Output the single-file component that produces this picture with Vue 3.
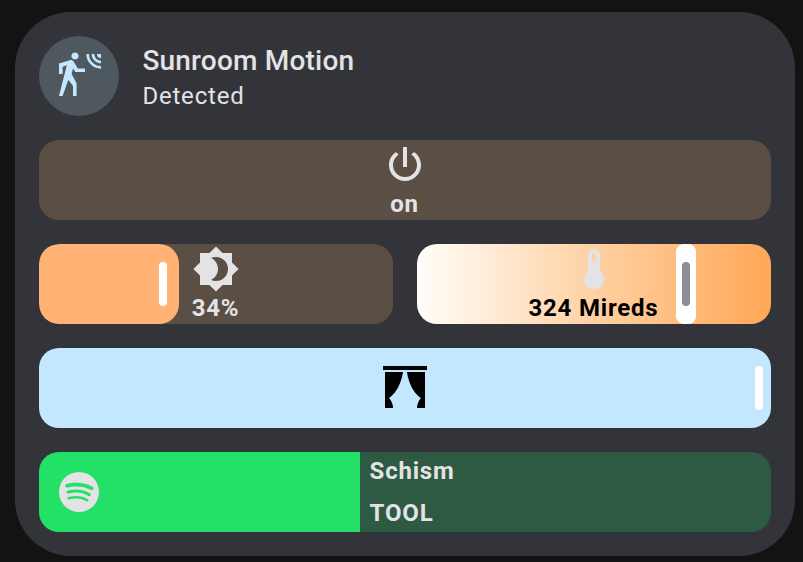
<script setup>
const icons = {
  motion:
    'M10,0.2C9,0.2 8.2,1 8.2,2C8.2,3 9,3.8 10,3.8C11,3.8 11.8,3 11.8,2C11.8,1 11,0.2 10,0.2M15.67,1A7.33,7.33 0 0,0 23,8.33V7A6,6 0 0,1 17,1H15.67M18.33,1C18.33,3.58 20.42,5.67 23,5.67V4.33C21.16,4.33 19.67,2.84 19.67,1H18.33M21,1A2,2 0 0,0 23,3V1H21M7.92,4.03C7.75,4.03 7.58,4.06 7.42,4.11L2,5.8V11H3.8V7.33L5.91,6.67L2,22H3.8L6.67,13.89L9,17V22H10.8V15.59L8.31,11.05L9.04,8.18L10.12,10H15V8.2H11.38L9.38,4.87C9.08,4.37 8.54,4.03 7.92,4.03Z',
  power:
    'M16.56,5.44L15.11,6.89C16.84,7.94 18,9.83 18,12A6,6 0 0,1 12,18A6,6 0 0,1 6,12C6,9.83 7.16,7.94 8.88,6.88L7.44,5.44C5.36,6.88 4,9.28 4,12A8,8 0 0,0 12,20A8,8 0 0,0 20,12C20,9.28 18.64,6.88 16.56,5.44M13,3H11V13H13',
  brightness:
    'M12,18C11.11,18 10.26,17.8 9.5,17.45C11.56,16.5 13,14.42 13,12C13,9.58 11.56,7.5 9.5,6.55C10.26,6.2 11.11,6 12,6A6,6 0 0,1 18,12A6,6 0 0,1 12,18M20,8.69V4H15.31L12,0.69L8.69,4H4V8.69L0.69,12L4,15.31V20H8.69L12,23.31L15.31,20H20V15.31L23.31,12L20,8.69Z',
  thermometer:
    'M15 13V5A3 3 0 0 0 9 5V13A5 5 0 1 0 15 13M12 4A1 1 0 0 1 13 5V8H11V5A1 1 0 0 1 12 4Z',
  curtains:
    'M23 3H1V1H23V3M2 22H6C6 19 4 17 4 17C10 13 11 4 11 4H2V22M22 4H13C13 4 14 13 20 17C20 17 18 19 18 22H22V4Z',
  spotify:
    'M17.9,10.9C14.7,9 9.35,8.8 6.3,9.75C5.8,9.9 5.3,9.6 5.15,9.15C5,8.65 5.3,8.15 5.75,8C9.3,6.95 15.15,7.15 18.85,9.35C19.3,9.6 19.45,10.2 19.2,10.65C18.95,11 18.35,11.15 17.9,10.9M17.8,13.7C17.55,14.05 17.1,14.2 16.75,13.95C14.05,12.3 9.95,11.8 6.8,12.8C6.4,12.9 5.95,12.7 5.85,12.3C5.75,11.9 5.95,11.45 6.35,11.35C10,10.25 14.5,10.8 17.6,12.7C17.9,12.85 18.05,13.35 17.8,13.7M16.6,16.45C16.4,16.75 16.05,16.85 15.75,16.65C13.4,15.2 10.45,14.9 6.95,15.7C6.6,15.8 6.3,15.55 6.2,15.25C6.1,14.9 6.35,14.6 6.65,14.5C10.45,13.65 13.75,14 16.35,15.6C16.7,15.75 16.75,16.15 16.6,16.45M12,2A10,10 0 0,0 2,12A10,10 0 0,0 12,22A10,10 0 0,0 22,12A10,10 0 0,0 12,2Z',
}
</script>

<template>
  <main class="page">
    <section class="card">
      <header class="header">
        <div class="badge">
          <svg class="icon" viewBox="0 0 24 24"><path :d="icons.motion" /></svg>
        </div>
        <div class="heading">
          <div class="title">Sunroom Motion</div>
          <div class="state">Detected</div>
        </div>
      </header>

      <div class="row power">
        <div class="content">
          <svg class="icon" viewBox="0 0 24 24"><path :d="icons.power" /></svg>
          <span class="label">on</span>
        </div>
      </div>

      <div class="pair">
        <div class="row brightness">
          <div class="fill"><i class="handle"></i></div>
          <div class="content">
            <svg class="icon" viewBox="0 0 24 24"><path :d="icons.brightness" /></svg>
            <span class="label">34%</span>
          </div>
        </div>
        <div class="row temperature">
          <div class="thumb"><i class="handle"></i></div>
          <div class="content">
            <svg class="icon" viewBox="0 0 24 24"><path :d="icons.thermometer" /></svg>
            <span class="label dark">324 Mireds</span>
          </div>
        </div>
      </div>

      <div class="row curtain">
        <div class="fill"><i class="handle"></i></div>
        <div class="content centered">
          <svg class="icon" viewBox="0 0 24 24"><path :d="icons.curtains" /></svg>
        </div>
      </div>

      <div class="row media">
        <div class="source">
          <svg class="icon" viewBox="0 0 24 24"><path :d="icons.spotify" /></svg>
        </div>
        <div class="track">
          <span class="label">Schism</span>
          <span class="label">TOOL</span>
        </div>
      </div>
    </section>
  </main>
</template>

<style>
body {
  background: #131313;
}
</style>

<style scoped>
.page {
  box-sizing: border-box;
  width: 803px;
  height: 562px;
  padding: 12px 8px 6px 15px;
  overflow: hidden;
  font-family: Roboto, 'Liberation Sans', sans-serif;
  color: #e3e3e6;
}
.card {
  box-sizing: border-box;
  height: 544px;
  padding: 24px;
  border-radius: 56px;
  background: #333439;
  display: flex;
  flex-direction: column;
  gap: 24px;
}
.header {
  display: flex;
  height: 80px;
  gap: 23.4px;
}
.badge {
  width: 80px;
  height: 80px;
  border-radius: 50%;
  background: #50585f;
  color: #c2e7ff;
  display: flex;
  align-items: center;
  justify-content: center;
}
.icon {
  display: block;
  width: 48px;
  height: 48px;
  flex: none;
  fill: currentColor;
}
.heading {
  padding-top: 5px;
}
.title {
  font-size: 28px;
  line-height: 40px;
  font-weight: 500;
  letter-spacing: 0.2px;
}
.state {
  font-size: 24px;
  line-height: 30px;
  letter-spacing: 0.8px;
}
.row {
  display: grid;
  height: 80px;
  border-radius: 20px;
  overflow: hidden;
}
.row > * {
  grid-row: 1;
}
.power,
.brightness {
  background: #5b4e44;
}
.pair {
  display: grid;
  grid-template-columns: 1fr 1fr;
  gap: 24px;
}
.content,
.fill,
.thumb {
  grid-column: 1;
}
.content {
  display: flex;
  flex-direction: column;
  align-items: center;
  padding-top: 1px;
}
.centered {
  padding-top: 0;
  justify-content: center;
}
.label {
  font-size: 24px;
  line-height: 30px;
  font-weight: 700;
  letter-spacing: 0.8px;
}
.content .label {
  margin-right: 1px;
}
.dark {
  color: #000;
}
.fill {
  box-sizing: border-box;
  display: flex;
  align-items: center;
  justify-content: flex-end;
}
.brightness .fill {
  width: 140px;
  padding-right: 12px;
  border-radius: 20px;
  background: #ffb273;
}
.handle {
  width: 8px;
  height: 44px;
  border-radius: 4px;
  background: #fff;
}
.temperature {
  background: linear-gradient(90deg, #fffefa 0%, #ffd2a6 48%, #ffa757 100%);
}
.thumb {
  width: 20px;
  height: 80px;
  margin-left: 259px;
  border-radius: 8px;
  background: #fff;
  display: flex;
  align-items: center;
  justify-content: center;
}
.thumb .handle {
  background: #8d8d99;
}
.curtain {
  background: #c2e7ff;
  color: #000;
}
.curtain .fill {
  padding-right: 8px;
}
.media {
  grid-template-columns: 321px 1fr;
  background: #2e5a43;
}
.source {
  background: #22e166;
  display: flex;
  align-items: center;
  padding-left: 16px;
}
.track {
  display: flex;
  flex-direction: column;
  gap: 12px;
  padding: 4px 0 0 9.6px;
}
</style>
